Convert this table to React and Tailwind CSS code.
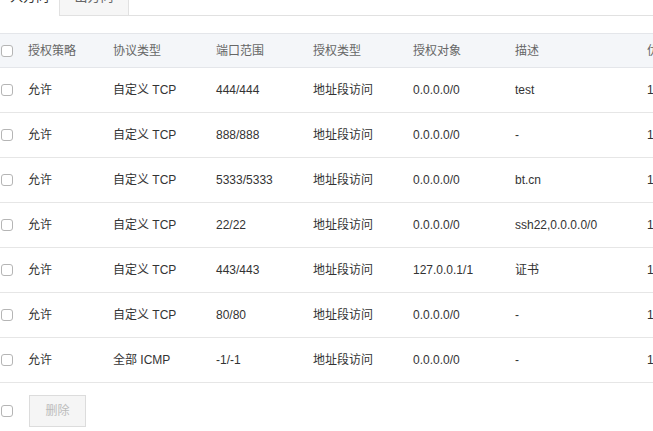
import React from "react";

const rows = [
  ["允许", "自定义 TCP", "444/444", "地址段访问", "0.0.0.0/0", "test", "1"],
  ["允许", "自定义 TCP", "888/888", "地址段访问", "0.0.0.0/0", "-", "1"],
  ["允许", "自定义 TCP", "5333/5333", "地址段访问", "0.0.0.0/0", "bt.cn", "1"],
  ["允许", "自定义 TCP", "22/22", "地址段访问", "0.0.0.0/0", "ssh22,0.0.0.0/0", "1"],
  ["允许", "自定义 TCP", "443/443", "地址段访问", "127.0.0.1/1", "证书", "1"],
  ["允许", "自定义 TCP", "80/80", "地址段访问", "0.0.0.0/0", "-", "1"],
  ["允许", "全部 ICMP", "-1/-1", "地址段访问", "0.0.0.0/0", "-", "1"],
];

const headers = ["授权策略", "协议类型", "端口范围", "授权类型", "授权对象", "描述", "优先级"];
const widths = ["w-[85px]", "w-[103px]", "w-[97px]", "w-[100px]", "w-[102px]", "w-[132px]", "w-[60px]"];

const Box = () => (
  <span className="block w-[12px] h-[12px] border border-[#b5b5b5] rounded-[3px] bg-white" />
);

export default function App() {
  return (
    <div
      className="w-[653px] h-[431px] overflow-hidden bg-white text-[12px] text-[#333]"
      style={{ fontFamily: '"Liberation Sans", "Noto Sans CJK SC", sans-serif' }}
    >
      {/* Tabs */}
      <div className="flex -mt-[22px] h-[38px]">
        <div className="w-[59px] h-full flex items-center justify-center text-[13px] text-[#333] bg-white">
          入方向
        </div>
        <div className="w-[70px] h-full flex items-center justify-center text-[13px] text-[#666] bg-[#f6f6f6] border-l border-r border-b border-[#e1e1e1]">
          出方向
        </div>
        <div className="flex-1 h-full border-b border-[#e1e1e1]" />
      </div>

      {/* Table */}
      <div className="mt-[17px] w-[720px]">
        <div className="flex items-center h-[35px] bg-[#f4f6f9] border-t border-b border-[#e4e6ea] text-[#666]">
          <div className="w-[28px] pl-[1px]">
            <Box />
          </div>
          {headers.map((h, i) => (
            <div key={h} className={`${widths[i]} shrink-0`}>
              {h}
            </div>
          ))}
        </div>
        {rows.map((r, ri) => (
          <div key={ri} className="flex items-center h-[45px] border-b border-[#e6e6e6]">
            <div className="w-[28px] pl-[1px]">
              <Box />
            </div>
            {r.map((c, i) => (
              <div key={i} className={`${widths[i]} shrink-0`}>
                {c}
              </div>
            ))}
          </div>
        ))}
      </div>

      {/* Footer */}
      <div className="flex items-center mt-[12px]">
        <div className="w-[29px] pl-[1px]">
          <Box />
        </div>
        <button className="w-[57px] h-[32px] bg-[#f5f5f5] border border-[#dcdcdc] text-[#bbb] text-[12px]">
          删除
        </button>
      </div>
    </div>
  );
}
